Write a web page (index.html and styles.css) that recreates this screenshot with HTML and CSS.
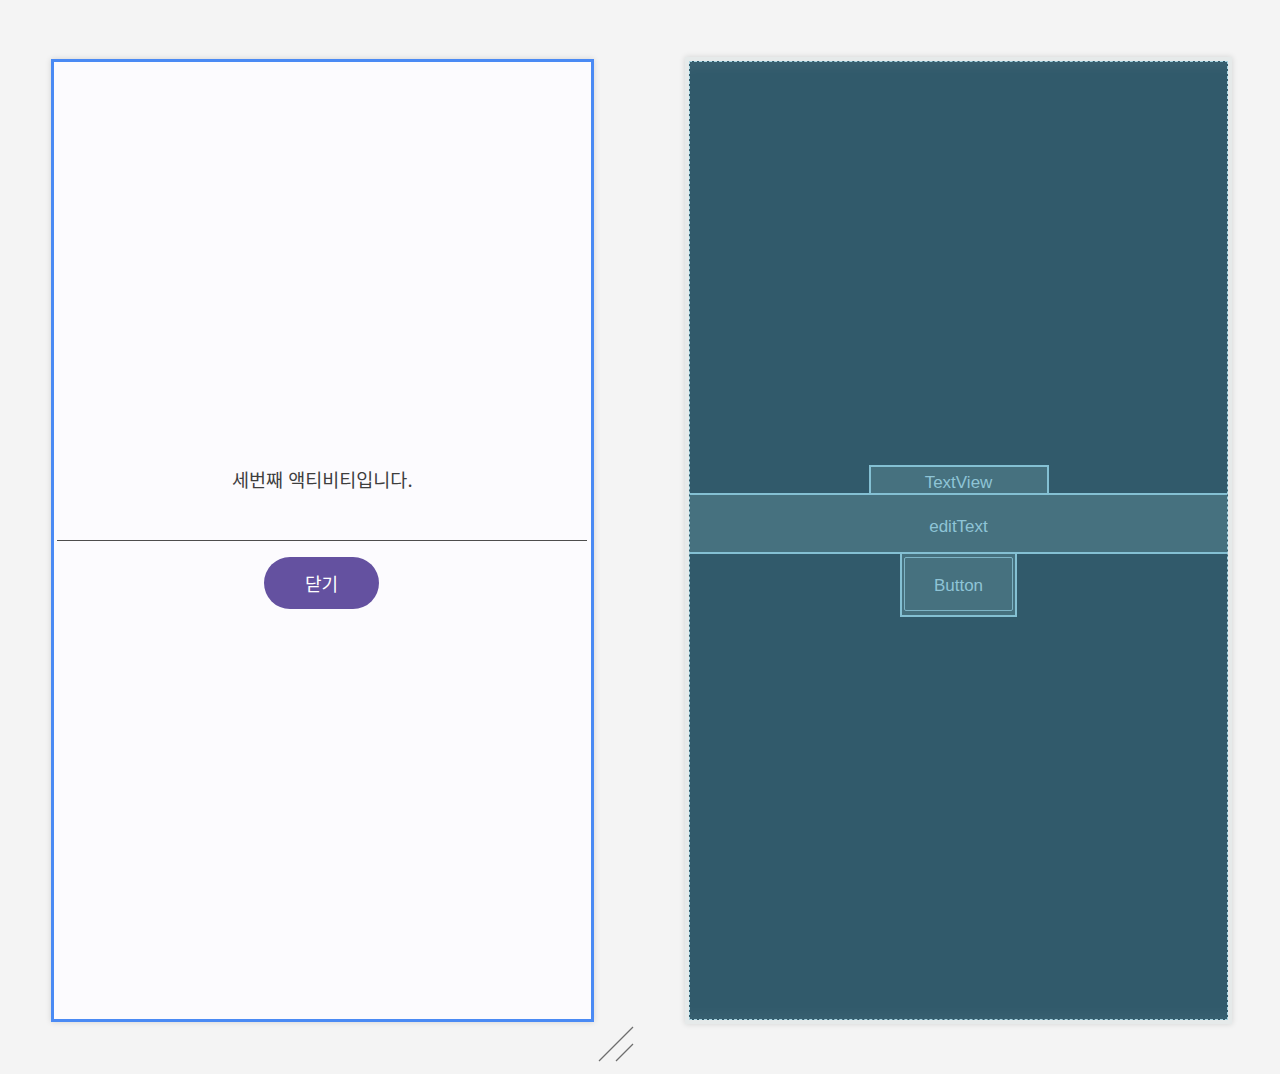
FILE: index.html
```html
<!DOCTYPE html>
<html lang="ko">
<head>
<meta charset="utf-8">
<title>Layout Editor</title>
<link rel="stylesheet" href="styles.css">
</head>
<body>
<div class="canvas">
  <div class="phone design">
    <div class="col">
      <div class="tv">세번째 액티비티입니다.</div>
      <div class="et"></div>
      <div class="btn-wrap"><div class="pill">닫기</div></div>
    </div>
  </div>
  <div class="phone blueprint">
    <div class="bp-surface">
      <div class="bp-tv">TextView</div>
      <div class="bp-et">editText</div>
      <div class="bp-btn"><div class="bp-btn-inner">Button</div></div>
    </div>
  </div>
  <svg class="resize" width="36" height="36" viewBox="0 0 36 36">
    <line x1="1" y1="35" x2="35" y2="1" stroke="#6e6e6e" stroke-width="1.2"/>
    <line x1="18" y1="35" x2="35" y2="18" stroke="#6e6e6e" stroke-width="1.2"/>
  </svg>
</div>
</body>
</html>
```

FILE: styles.css
```css
html, body {
  margin: 0;
  padding: 0;
}
body {
  background: #f4f4f4;
  height: 1074px;
  overflow: hidden;
  font-family: "Liberation Sans", Arial, sans-serif;
}
.canvas {
  position: relative;
  display: flex;
  align-items: flex-start;
  padding: 57px 0 0 51px;
  height: 1074px;
  box-sizing: border-box;
}
.phone {
  box-sizing: border-box;
  box-shadow: 0 0 6px rgba(0, 0, 0, 0.14);
}
.design {
  margin-top: 2px;
  width: 543px;
  height: 963px;
  border: 3px solid #4a8af4;
  background: #fcfbfe;
}
.col {
  height: 100%;
  display: flex;
  flex-direction: column;
  align-items: center;
  justify-content: center;
}
.tv {
  width: 180px;
  height: 28px;
  line-height: 28px;
  text-align: center;
  font-family: "Noto Sans CJK KR", "Noto Sans", sans-serif;
  font-size: 18.5px;
  color: #3e3e3e;
  white-space: nowrap;
  margin-left: -1px;
}
.et {
  position: relative;
  width: 100%;
  height: 60px;
}
.et::after {
  content: "";
  position: absolute;
  left: 3px;
  right: 4px;
  top: 47px;
  height: 1px;
  background: #4d4d4d;
}
.btn-wrap {
  height: 65px;
  margin-top: -2px;
  display: flex;
  justify-content: center;
  align-items: flex-start;
  padding-top: 6px;
  box-sizing: border-box;
}
.pill {
  width: 115px;
  height: 52px;
  border-radius: 26px;
  background: #6451a0;
  color: #ffffff;
  font-family: "Noto Sans CJK KR", "Noto Sans", sans-serif;
  font-size: 18px;
  line-height: 52px;
  text-align: center;
  margin-left: -2px;
}
.blueprint {
  margin-left: 91px;
  width: 547px;
  height: 967px;
  border: 4px solid #e6eaea;
  background: #315a6b;
}
.bp-surface {
  height: 100%;
  box-sizing: border-box;
  border: 1px dashed #a9d5e2;
  display: flex;
  flex-direction: column;
  align-items: center;
  justify-content: center;
  color: #8ec4d6;
  font-size: 17px;
  box-shadow: inset 0 14px 14px -10px rgba(255, 255, 255, 0.06), inset 0 -14px 14px -10px rgba(255, 255, 255, 0.05);
}
.bp-tv {
  width: 180px;
  height: 29px;
  box-sizing: border-box;
  border: 2px solid #84c0d3;
  border-bottom: none;
  background: #46717f;
  text-align: center;
  line-height: 32px;
}
.bp-et {
  width: 100%;
  height: 61px;
  box-sizing: border-box;
  border-top: 2px solid #84c0d3;
  border-bottom: 2px solid #84c0d3;
  background: #46717f;
  text-align: center;
  line-height: 63px;
  margin-top: -1px;
}
.bp-btn {
  width: 117px;
  height: 65px;
  margin-top: -2px;
  box-sizing: border-box;
  border: 2px solid #84c0d3;
  background: #46717f;
  padding: 3px 2px 4px 2px;
}
.bp-btn-inner {
  height: 100%;
  box-sizing: border-box;
  border: 1px solid #7db4c6;
  border-radius: 2px;
  text-align: center;
  line-height: 56px;
}
.resize {
  position: absolute;
  left: 598px;
  top: 1026px;
}
```
